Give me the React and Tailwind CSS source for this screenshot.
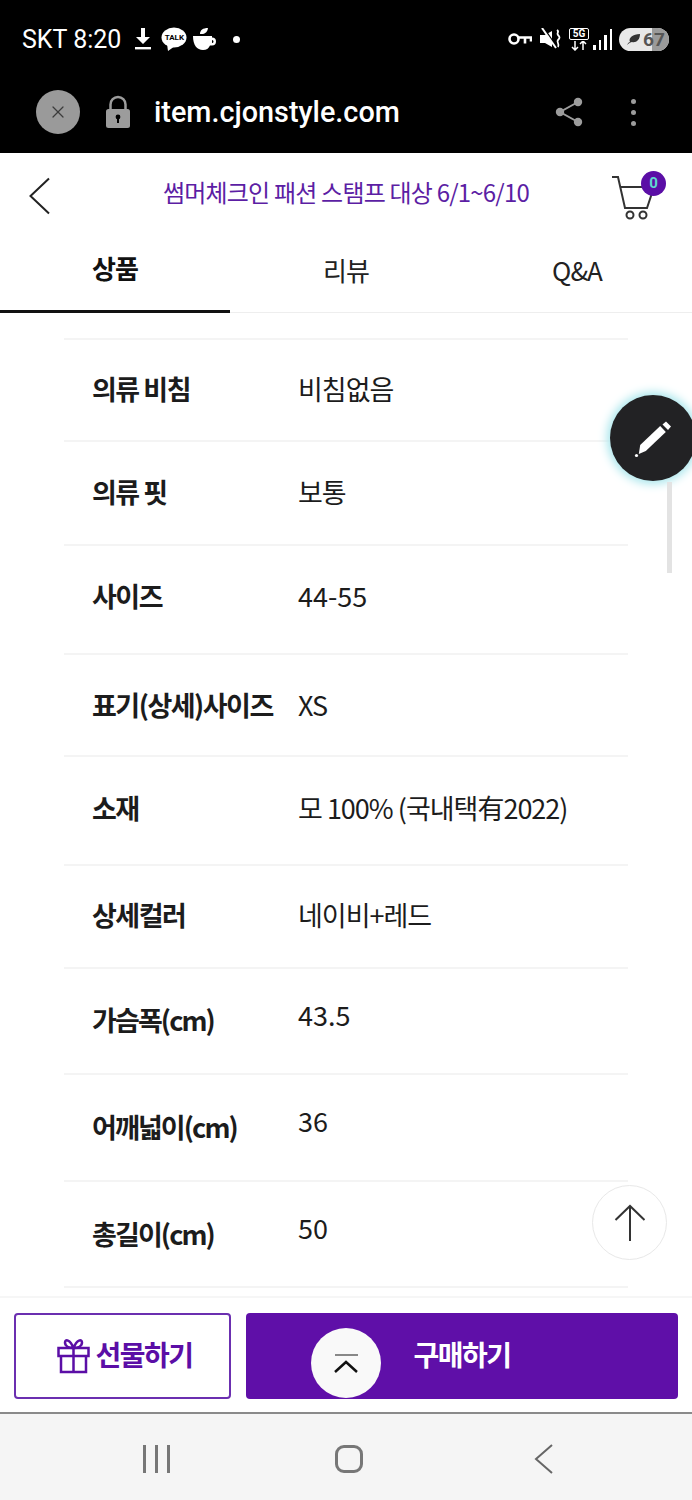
import { X } from "lucide-react";

const ROWS = [
  { label: "의류 비침", value: "비침없음", h: "h-[102px]", pb: "pb-[2px]" },
  { label: "의류 핏", value: "보통", h: "h-[104px]", pb: "pb-[2px]" },
  { label: "사이즈", value: "44-55", h: "h-[109px]", pb: "pb-[7px]", num: true },
  { label: "표기(상세)사이즈", value: "XS", h: "h-[102px]", pb: "pb-0" },
  { label: "소재", value: "모 100% (국내택有2022)", h: "h-[109px]", pb: "pb-[4px]" },
  { label: "상세컬러", value: "네이비+레드", h: "h-[103px]", pb: "pb-[2px]" },
  { label: "가슴폭(cm)", value: "43.5", h: "h-[106px]", pb: "pb-[2px]", num: true, valueUp: "-translate-y-[5px]", tight: true },
  { label: "어깨넓이(cm)", value: "36", h: "h-[107px]", pb: "pb-0", num: true, valueUp: "-translate-y-[6px]", tight: true },
  { label: "총길이(cm)", value: "50", h: "h-[106px]", pb: "pb-0", num: true, valueUp: "-translate-y-[6px]", tight: true },
];

function StatusBar() {
  return (
    <div className="h-[78px] flex items-center justify-between pl-[22px] pr-[23px] text-white">
      <div className="flex items-center">
        <span className="font-['Roboto',sans-serif] text-[25px] translate-y-px mr-[13px]">SKT 8:20</span>
        <svg width="18" height="22" viewBox="0 0 18 22" fill="#fff" className="mr-[9px]">
          <path d="M7 0h4v9h5l-7 7-7-7h5z" />
          <rect x="1" y="19" width="16" height="2.4" />
        </svg>
        <div className="relative w-[26px] h-[24px] mr-[6px]">
          <svg width="26" height="24" viewBox="0 0 26 24" fill="#fff">
            <ellipse cx="13" cy="10.5" rx="12.5" ry="10" />
            <path d="M6 17l1 7 7-5z" />
          </svg>
          <span className="absolute left-0 top-[5px] w-full text-center text-[8px] leading-[11px] font-bold text-black font-['Roboto',sans-serif]">TALK</span>
        </div>
        <svg width="24" height="24" viewBox="0 0 24 24" fill="#fff" className="mr-[16px]">
          <path d="M0 9h19v1.5a4 4 0 0 1 0 8h-2c-1.5 3-3.5 4.500-7 4.500-6 0-10-5-10-14zm19 4v3a1.500 1.500 0 0 0 0-3z" />
          <path d="M7 7c0-4 3-6 8-6-.5 4-3 6.500-8 6z" />
        </svg>
        <span className="w-[7px] h-[7px] rounded-full bg-white" />
      </div>
      <div className="flex items-center">
        <svg width="24" height="16" viewBox="0 0 24 16" fill="none" stroke="#fff" strokeWidth="2.6" className="mr-[8px]">
          <circle cx="6" cy="8" r="4.500" />
          <path d="M11 6.500h12v4M17 6.500v6" />
        </svg>
        <svg width="22" height="22" viewBox="0 0 22 22" fill="none" className="mr-[7px]">
          <path d="M0 7h5l7-4v16l-7-4H0z" fill="#fff" />
          <path d="M3.500 0l13 19" stroke="#000" strokeWidth="2" />
          <path d="M2 0l14 20" stroke="#fff" strokeWidth="2" />
          <path d="M17 2c3 2-1 3 1 5s2 3 0 5 2 4 0 7" stroke="#fff" strokeWidth="1.800" />
        </svg>
        <div className="relative w-[20px] h-[23px] mr-[4px]">
          <div className="border-[1.5px] border-white rounded-[2px] h-[12px] flex items-center justify-center">
            <span className="text-[10px] leading-none font-bold text-white font-['Roboto',sans-serif]">5G</span>
          </div>
          <svg width="20" height="10" viewBox="0 0 20 10" stroke="#fff" strokeWidth="1.500" fill="none" className="mt-[1px]">
            <path d="M6 0v9M3 6l3 3 3-3M14 9V0M11 3l3-3 3 3" />
          </svg>
        </div>
        <div className="flex items-end gap-[3px] h-[22px] mr-[7px]">
          <span className="w-[2.500px] h-[5px] bg-white" />
          <span className="w-[2.500px] h-[10px] bg-white" />
          <span className="w-[2.500px] h-[15px] bg-white" />
          <span className="w-[2.500px] h-[21px] bg-white" />
        </div>
        <div className="relative w-[50px] h-[23px] rounded-full overflow-hidden bg-[#e8e8e8] flex items-center pl-[7px]">
          <span className="absolute right-0 top-0 h-full w-[17px] bg-[#9a9a9a]" />
          <svg width="14" height="12" viewBox="0 0 14 12" fill="#333" className="relative mr-[3px]">
            <path d="M1 12c1-2 2-3 3-3C2 5 7 1 14 1c0 6-4 9-8 8-1 0-3 1-5 3z" />
          </svg>
          <span className="relative text-[19px] leading-none font-bold text-[#555] font-['Roboto',sans-serif]">67</span>
        </div>
      </div>
    </div>
  );
}

function UrlBar() {
  return (
    <div className="h-[75px] flex items-center pl-[36px] pb-[7px]">
      <div className="w-[44px] h-[44px] rounded-full bg-[#9a9a9a] flex items-center justify-center mr-[25px]">
        <X size={20} strokeWidth={1.500} color="#3c3c3c" />
      </div>
      <svg width="26" height="34" viewBox="0 0 26 34" className="mr-[23px]">
        <path d="M5.500 15V9.500a7.500 7.500 0 0 1 15 0V15" fill="none" stroke="#9c9c9c" strokeWidth="2.500" />
        <rect x="1" y="14" width="24" height="19" rx="2.500" fill="#9c9c9c" />
        <circle cx="13" cy="22" r="2.400" fill="#000" />
        <rect x="12" y="22" width="2" height="6" fill="#000" />
      </svg>
      <span className="font-['Roboto',sans-serif] font-medium text-[28.8px] text-white leading-none">item.cjonstyle.com</span>
      <svg width="30" height="30" viewBox="0 0 30 30" className="ml-[154px] mr-[47px]">
        <path d="M24 5L6 15l18 10" fill="none" stroke="#9c9c9c" strokeWidth="2" />
        <circle cx="24" cy="5" r="4.200" fill="#9c9c9c" />
        <circle cx="6" cy="15" r="4.200" fill="#9c9c9c" />
        <circle cx="24" cy="25" r="4.200" fill="#9c9c9c" />
      </svg>
      <div className="flex flex-col gap-[6px]">
        <span className="w-[5px] h-[5px] rounded-full bg-[#9c9c9c]" />
        <span className="w-[5px] h-[5px] rounded-full bg-[#9c9c9c]" />
        <span className="w-[5px] h-[5px] rounded-full bg-[#9c9c9c]" />
      </div>
    </div>
  );
}

function Header() {
  return (
    <div className="relative h-[80px] flex items-center justify-center pb-[2px] shrink-0">
      <svg width="24" height="38" viewBox="0 0 24 38" fill="none" stroke="#222" strokeWidth="2" className="absolute left-[28px] top-[24px]">
        <path d="M21 1.500L2.500 19 21 36.500" />
      </svg>
      <span className="text-[24px] leading-none tracking-[-0.800px] text-[#5c1ea4]">썸머체크인 패션 스탬프 대상 6/1~6/10</span>
      <div className="absolute left-[612px] top-[16px] w-[56px] h-[50px]">
        <svg width="44" height="50" viewBox="0 0 44 50" fill="none" stroke="#333" strokeWidth="2" className="absolute left-0 top-[7px]">
          <path d="M0 1h6l7 31h22l7-21H9" />
          <circle cx="18" cy="39" r="3.500" />
          <circle cx="31" cy="39" r="3.500" />
        </svg>
        <span className="absolute left-[29px] top-[2px] w-[25px] h-[25px] rounded-full bg-[#5b0ea6] text-[#5fd8cf] text-[15px] leading-[25px] text-center font-bold font-['Roboto',sans-serif]">0</span>
      </div>
    </div>
  );
}

function Tabs() {
  return (
    <div className="h-[80px] flex border-b border-[#eeeeee] shrink-0 text-[26px] tracking-[-1px] text-[#222]">
      <div className="w-[230px] border-b-[3px] border-[#111] -mb-px flex items-center justify-center pb-[8px] font-bold text-[#111]">상품</div>
      <div className="w-[232px] flex items-center justify-center pb-[7px]">리뷰</div>
      <div className="w-[230px] flex items-center justify-center pb-[7px]">Q&amp;A</div>
    </div>
  );
}

function SpecRow({ row }) {
  return (
    <div className={`${row.h} ${row.pb} flex items-center pl-[28px] border-b-2 border-[#f4f4f4]`}>
      <div className={`w-[206px] shrink-0 font-bold text-[27px] text-[#1c1c1c] whitespace-nowrap ${row.tight ? "tracking-[-1.900px]" : "tracking-[-1.500px]"}`}>{row.label}</div>
      <div className={`text-[27px] text-[#1c1c1c] whitespace-nowrap ${row.num ? "tracking-normal" : "tracking-[-1px]"} ${row.valueUp || ""}`}>{row.value}</div>
    </div>
  );
}

export default function App() {
  return (
    <div className="relative w-[692px] h-[1500px] overflow-hidden bg-white flex flex-col font-['Noto_Sans_CJK_KR','Roboto',sans-serif]">
      <div className="bg-black h-[153px] shrink-0">
        <StatusBar />
        <UrlBar />
      </div>
      <Header />
      <Tabs />

      <div className="flex-1 min-h-0 overflow-hidden pt-[25px]">
        <div className="mx-[64px] border-t-2 border-[#f4f4f4]">
          {ROWS.map((row) => (
            <SpecRow key={row.label} row={row} />
          ))}
        </div>
      </div>

      <div className="h-[116px] shrink-0 border-t-2 border-[#f6f6f6] flex gap-[15px] px-[14px] pt-[15px]">
        <div className="w-[217px] h-[86px] rounded-[4px] border-2 border-[#6b2fb0] flex items-center justify-center gap-[5px] pl-[5px] pb-[4px] text-[#5b0ea6]">
          <svg width="33" height="36" viewBox="0 0 33 36" fill="none" stroke="#5b0ea6" strokeWidth="2.500" className="translate-y-[2px]">
            <path d="M1.500 10h30v8h-30zM4 18v16h25V18M16.500 10v24" />
            <path d="M16.500 10C12 10 8 8 8 4.500S13 1 16.500 10zM16.500 10C21 10 25 8 25 4.500S20 1 16.500 10z" />
          </svg>
          <span className="text-[28px] font-bold tracking-[-1.500px]">선물하기</span>
        </div>
        <div className="flex-1 h-[86px] rounded-[4px] bg-[#5f0fa8] flex items-center justify-center pb-[4px] text-white">
          <span className="text-[28px] font-bold tracking-[-1.500px]">구매하기</span>
        </div>
      </div>

      <div className="h-[88px] shrink-0 bg-[#f5f5f5] border-t-2 border-[#8a8a8a] flex items-center pl-[143px] pt-[3px]">
        <div className="flex gap-[9.500px]">
          <span className="w-[2.500px] h-[28px] bg-[#777]" />
          <span className="w-[2.500px] h-[28px] bg-[#777]" />
          <span className="w-[2.500px] h-[28px] bg-[#777]" />
        </div>
        <span className="ml-[165px] w-[28px] h-[28px] rounded-[9px] border-[3px] border-[#777]" />
        <svg width="19" height="30" viewBox="0 0 19 30" fill="none" stroke="#666" strokeWidth="2" className="ml-[171px]">
          <path d="M18 1L2 15l16 14" />
        </svg>
      </div>

      {/* floating buttons */}
      <div className="absolute left-[610px] top-[395px] w-[86px] h-[86px] rounded-full bg-[#222224] shadow-[0_0_10px_3px_#a9e6ec] flex items-center justify-center">
        <svg width="40" height="40" viewBox="0 0 40 40" fill="#fff">
          <path d="M7.200 27.100L27.200 8.100l5.600 5.800-20 19-7 3z" />
          <path d="M29.500 6.500l5.500 5.500 3-3.500-5-5z" />
          <circle cx="3.500" cy="37.500" r="1.600" />
        </svg>
      </div>
      <div className="absolute left-[667px] top-[482px] w-[5px] h-[91px] bg-[#e3e3e3]" />
      <div className="absolute left-[592px] top-[1185px] w-[75px] h-[75px] rounded-full border-[1.5px] border-[#e8e8e8] bg-white flex items-center justify-center">
        <svg width="32" height="38" viewBox="0 0 32 38" fill="none" stroke="#333" strokeWidth="2">
          <path d="M1.500 16L16 2l14.500 14M16 2v35" />
        </svg>
      </div>
      <div className="absolute left-[311px] top-[1328px] w-[70px] h-[70px] rounded-full bg-[#f9f9f9] flex flex-col items-center justify-center">
        <span className="w-[23px] h-[2px] bg-[#888] mb-[3px]" />
        <svg width="24" height="14" viewBox="0 0 24 14" fill="none" stroke="#111" strokeWidth="2.500">
          <path d="M1 13L12 3l11 10" />
        </svg>
      </div>
    </div>
  );
}
